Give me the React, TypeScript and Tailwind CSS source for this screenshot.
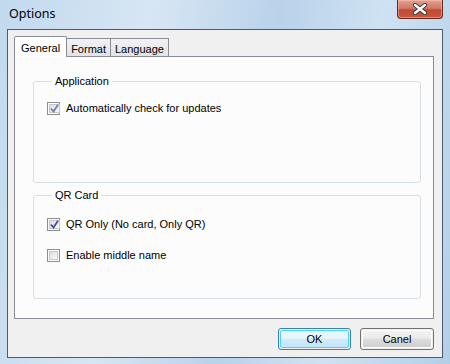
import React from 'react';

const font = { fontFamily: 'Tahoma, "Liberation Sans", Arial, sans-serif' };

const CheckBox: React.FC<{ checked?: boolean; dim?: boolean; label: string }> = ({ checked, dim, label }) => {
  return (
    <label className="flex items-center gap-[6px] h-[13px]">
      <span className="w-[13px] h-[13px] border border-[#8e8f8f] bg-white p-[1px] flex">
        <span className="flex-1 flex items-center justify-center border border-[#c5c7cb] bg-[linear-gradient(135deg,#dcdcdc,#fafafa)]">
          {checked && (
            <svg width="9" height="9" viewBox="0 0 9 9">
              <path
                d="M1 4.5 L3.5 7.5 L8 0.8"
                fill="none"
                stroke={dim ? '#6d7eb5' : '#3c4f9a'}
                strokeWidth="1.8"
              />
            </svg>
          )}
        </span>
      </span>
      <span className="text-[11px] text-black leading-none">{label}</span>
    </label>
  );
};

const GroupBox: React.FC<{ title: string; className: string; children?: React.ReactNode }> = ({
  title,
  className,
  children,
}) => {
  return (
    <fieldset className={`border border-[#d5dfe5] rounded-[3px] ${className}`}>
      <legend className="ml-[5px] px-[3px] text-[11px] leading-[13px] text-black">{title}</legend>
      {children}
    </fieldset>
  );
};

const Button: React.FC<{ label: string; focused?: boolean; w: string }> = ({ label, focused, w }) => {
  return (
    <button
      className={`${w} h-[22px] rounded-[3px] border text-[11px] text-black p-[1px] ${
        focused ? 'border-[#3c7fb1]' : 'border-[#707070]'
      }`}
    >
      <span
        className={`flex h-full items-center justify-center rounded-[2px] border ${
          focused
            ? 'border-[#48d6fb] bg-[linear-gradient(#eaf6fd_0%,#eaf6fd_45%,#d3eaf7_50%,#bee6fd_100%)]'
            : 'border-[#fcfcfc] bg-[linear-gradient(#f2f2f2_0%,#ebebeb_45%,#dddddd_50%,#cfcfcf_100%)]'
        }`}
      >
        {label}
      </span>
    </button>
  );
};

export default function App() {
  return (
    <div
      className="w-[450px] h-[364px] flex flex-col bg-[linear-gradient(100deg,#c2d9ee_0%,#d7e6f4_30%,#b9d2ea_55%,#cfe2f3_75%,#b2cfe8_100%)]"
      style={font}
    >
      {/* title bar */}
      <div className="h-[29px] flex items-start justify-between">
        <div
          className="pl-[9px] pt-[5px] text-[12.5px] text-black"
          style={{ fontFamily: '"Segoe UI", "Noto Sans", "Liberation Sans", sans-serif' }}
        >
          Options
        </div>
        <div className="mr-[7px] w-[46px] h-[19px] rounded-b-[4px] border border-t-0 border-[#6b2418] bg-[linear-gradient(#e3a08f_0%,#d07a68_45%,#c04a35_55%,#c9553e_100%)] flex items-center justify-center shadow-[inset_0_0_0_1px_rgba(255,200,190,0.5)]">
          <svg width="16" height="12" viewBox="0 0 16 12">
            <path d="M3 2 L13 10 M13 2 L3 10" stroke="#3a3a3a" strokeWidth="4.2" strokeLinecap="round" />
            <path d="M3 2 L13 10 M13 2 L3 10" stroke="#ffffff" strokeWidth="2.4" strokeLinecap="round" />
          </svg>
        </div>
      </div>

      {/* client area */}
      <div className="mx-[7px] h-[329px] border border-[#4e5b68] bg-[#f0f0f0] flex flex-col">
        <div className="pl-[6px] pt-[6px]">
          {/* tabs */}
          <div className="flex items-end h-[20px] text-[11px] text-black">
            <div className="relative z-10 h-[21px] -mb-[1px] px-[6px] pt-[3px] border border-b-0 border-[#898c95] bg-white rounded-t-[2px]">
              General
            </div>
            <div className="h-[18px] px-[4px] pt-[2px] border border-l-0 border-b-0 border-[#898c95] bg-[linear-gradient(#f2f2f2,#e3e3e3)]">
              Format
            </div>
            <div className="h-[18px] px-[4px] pt-[2px] border border-l-0 border-b-0 border-[#898c95] bg-[linear-gradient(#f2f2f2,#e3e3e3)]">
              Language
            </div>
          </div>
          {/* panel */}
          <div className="w-[420px] h-[263px] border border-[#898c95] bg-[#fcfcfc] pt-[18px] pl-[18px] pr-[12px] flex flex-col gap-[6px]">
            <GroupBox title="Application" className="h-[108px] pl-[13px] pt-[14px]">
              <CheckBox checked dim label="Automatically check for updates" />
            </GroupBox>
            <GroupBox title="QR Card" className="h-[110px] pl-[13px] pt-[16px] flex flex-col gap-[18px]">
              <CheckBox checked label="QR Only (No card, Only QR)" />
              <CheckBox label="Enable middle name" />
            </GroupBox>
          </div>
        </div>
        <div className="flex justify-end gap-[9px] pr-[8px] pt-[9px]">
          <Button label="OK" focused w="w-[73px]" />
          <Button label="Canel" w="w-[74px]" />
        </div>
      </div>
    </div>
  );
}
